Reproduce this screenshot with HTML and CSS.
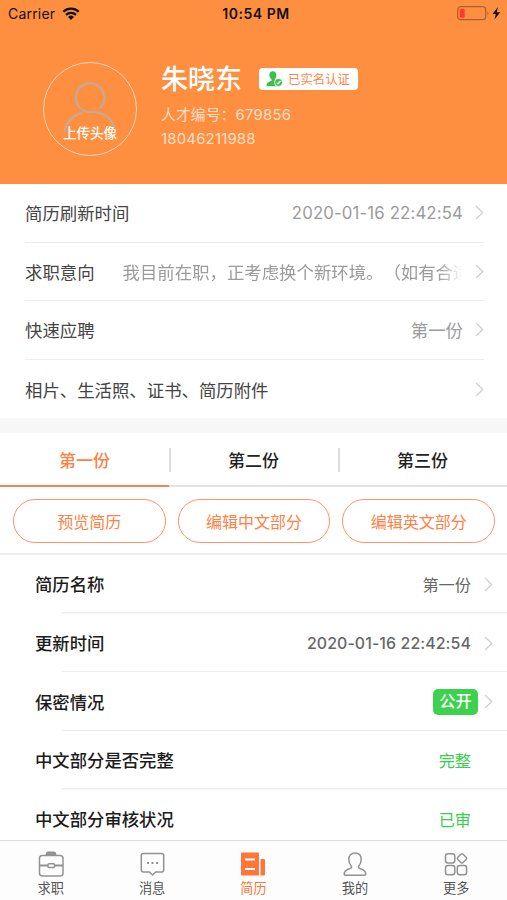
FILE: index.html
```html
<!DOCTYPE html>
<html lang="zh-CN">
<head>
<meta charset="utf-8">
<title>简历</title>
<link rel="stylesheet" href="styles.css">
</head>
<body>
<svg width="0" height="0" class="defs"><symbol id="chev" viewBox="0 0 9 15"><path d="M1 1l6.800 6.500L1 14" fill="none" stroke="#cfcfd1" stroke-width="1.200"/></symbol></svg>
<div class="app">
  <header class="hero">
    <div class="status">
      <div class="carrier"><span>Carrier</span>
        <svg width="18" height="13" viewBox="0 0 18 13"><g fill="none" stroke="#111" stroke-width="2.300"><path d="M1.300 4.800a11 11 0 0 1 15.400 0"/><path d="M4 7.900a7.200 7.200 0 0 1 10 0"/></g><path d="M6 10a4.300 4.300 0 0 1 6 0l-3 3z" fill="#111"/></svg>
      </div>
      <div class="clock">10:54 PM</div>
      <div class="power">
        <svg width="45" height="15" viewBox="0 0 45 15"><rect x=".7" y=".7" width="28" height="13" rx="3" fill="none" stroke="#a8622e" stroke-width="1.200"/><rect x="2.700" y="2.700" width="5" height="9" rx="1" fill="#fb3b30"/><path d="M30.500 5q2 2.200 0 4.400z" fill="#a8622e"/><path d="M41 1l-5.500 7h3.300l-1.300 5.500L43.200 6.300h-3.500z" fill="#111"/></svg>
      </div>
    </div>
    <div class="profile">
      <div class="avatar">
        <svg width="54" height="54" viewBox="0 0 54 54" fill="none" stroke="#bbada2" stroke-width="2"><path d="M36.500 27.500A14.300 14.300 0 1 0 28 31"/><path d="M18.500 32Q3 37 1.500 52M28 31Q47 31 51.500 47"/></svg>
        <span>上传头像</span>
      </div>
      <div class="person">
        <div class="name-line"><h1>朱晓东</h1>
          <div class="verified"><svg width="17" height="16" viewBox="0 0 17 16"><path d="M6.800.3c2.300 0 3.800 1.700 3.600 4.200-.1 1.700-.8 2.800-1.500 3.600v1.200l2 1.200 1 4.800H.5c0-3 .8-4 5-5.600V8.300C4 7 3.200 5.500 3.300 4 3.500 1.700 4.700.3 6.800.3z" fill="#3cc04b"/><circle cx="12.500" cy="11.500" r="4" fill="#3cc04b" stroke="#fff" stroke-width=".8"/><path d="M10.700 11.800l1.300 1.200 2.500-3" fill="none" stroke="#fff" stroke-width="1.200"/></svg><span>已实名认证</span></div>
        </div>
        <p>人才编号：<i>679856</i></p>
        <p>18046211988</p>
      </div>
    </div>
  </header>
  <section class="summary">
    <div class="row"><b>简历刷新时间</b><span class="num">2020-01-16 22:42:54</span><svg class="chev"><use href="#chev"/></svg></div>
    <div class="row"><b>求职意向</b><span class="fade">我目前在职，正考虑换个新环境。（如有合适</span><svg class="chev"><use href="#chev"/></svg></div>
    <div class="row"><b>快速应聘</b><span>第一份</span><svg class="chev"><use href="#chev"/></svg></div>
    <div class="row"><b>相片、生活照、证书、简历附件</b><span></span><svg class="chev"><use href="#chev"/></svg></div>
  </section>
  <nav class="tabs"><div class="on">第一份</div><div>第二份</div><div>第三份</div></nav>
  <div class="actions"><button>预览简历</button><button>编辑中文部分</button><button>编辑英文部分</button></div>
  <section class="details">
    <div class="item"><b>简历名称</b><span>第一份</span><svg class="chev"><use href="#chev"/></svg></div>
    <div class="item"><b>更新时间</b><span class="num">2020-01-16 22:42:54</span><svg class="chev"><use href="#chev"/></svg></div>
    <div class="item"><b>保密情况</b><span class="pill">公开</span><svg class="chev"><use href="#chev"/></svg></div>
    <div class="item"><b>中文部分是否完整</b><span class="ok">完整</span></div>
    <div class="item"><b>中文部分审核状况</b><span class="ok">已审</span></div>
  </section>
  <footer class="bar">
    <div><svg viewBox="0 0 28 28"><path d="M9.500 4.200q0-2 2-2h5q2 0 2 2z" fill="#929292"/><rect x="2.500" y="5.500" width="23.500" height="20.500" rx="3"/><path d="M2.500 15.500h8.500M17.500 15.500H26" stroke-width="2"/><rect x="11" y="13.700" width="6.500" height="3.800" rx="1"/></svg><span>求职</span></div>
    <div><svg viewBox="0 0 28 28"><path d="M5.300 3.500h18.400q2 0 2 2V20q0 2-2 2h-6l-3.200 3-3.200-3h-6q-2 0-2-2V5.500q0-2 2-2z"/><path d="M9 13h2M13.500 13h2M18 13h2" stroke-width="2"/></svg><span>消息</span></div>
    <div class="on"><svg viewBox="0 0 28 28"><path d="M2 3.500q0-1 1-1h16q1 0 1 1v22H3q-1 0-1-1zM21.500 9H25q1 0 1 1v14.500q0 1-1 1h-3.500z" fill="#ff7638" stroke="none"/><path d="M6 9.500h10M6 19h10" stroke="#fff" stroke-width="2"/></svg><span>简历</span></div>
    <div><svg viewBox="0 0 28 28"><path d="M14 3c4 0 6.200 2.500 6.200 6.500 0 3-1 5-2.400 6.500-.8 1.200-.2 2 1 2.500 4.500 1.200 6 2.500 6 5.500 0 .8-.5 1.300-1.300 1.300h-19c-.8 0-1.300-.5-1.300-1.300 0-3 1.500-4.300 6-5.500 1.200-.5 1.800-1.300 1-2.500-1.400-1.500-2.400-3.500-2.400-6.500C7.800 5.500 10 3 14 3z"/></svg><span>我的</span></div>
    <div><svg viewBox="0 0 28 28"><rect x="3.500" y="3.700" width="9.300" height="9.300" rx="2.500"/><rect x="3.500" y="15.500" width="9.300" height="9.300" rx="2.500"/><rect x="15.300" y="15.500" width="9.300" height="9.300" rx="2.500"/><rect x="16.300" y="4.700" width="7.400" height="7.400" rx="1.500" transform="rotate(45 20 8.400)"/></svg><span>更多</span></div>
  </footer>
</div>
</body>
</html>
```
FILE: styles.css
```css
* { box-sizing: border-box; }
body { margin: 0; font-family: Inter, "Noto Sans CJK SC", sans-serif; color: #444; background: #fff; text-spacing-trim: space-all; }
.defs { position: absolute; }
.app { width: 507px; height: 900px; overflow: hidden; display: flex; flex-direction: column; }
.hero { height: 184px; flex: none; background: #ff8f40; color: #fff; }
.status { height: 27px; display: grid; grid-template-columns: 1fr auto 1fr; align-items: center; padding: 0 5px 0 8px; color: #111; font-size: 14px; }
.carrier { display: flex; align-items: center; gap: 7px; letter-spacing: .2px; }
.clock { font-weight: 600; letter-spacing: .55px; padding-left: 2px; }
.power { display: flex; justify-content: flex-end; }
.profile { display: flex; padding: 35px 0 0 43px; }
.avatar { width: 94px; height: 94px; border: 1.500px solid #ffd5b8; border-radius: 50%; position: relative; display: flex; justify-content: center; padding-top: 18px; }
.avatar span { position: absolute; left: 0; right: 0; top: 61px; text-align: center; font-size: 13.500px; line-height: 18px; font-weight: 500; }
.person { padding-left: 24px; }
.name-line { display: flex; align-items: center; height: 34px; gap: 17px; }
h1 { margin: 0; font-size: 27px; line-height: 34px; font-weight: 500; position: relative; top: 1px; }
.verified { width: 99px; height: 22px; border-radius: 4px; background: #fff; color: #ff8547; display: flex; align-items: center; gap: 5px; padding-left: 7px; font-size: 12.400px; white-space: nowrap; }
.person p { margin: 0; font-size: 14.800px; line-height: 23px; color: #ffdfc9; letter-spacing: .1px; }
.person p:last-child { font-size: 15px; letter-spacing: .15px; }
.person i { font-style: normal; letter-spacing: .3px; }
.person p:first-of-type { margin-top: 8px; }
.summary { height: 249px; flex: none; padding: 0 23px 0 25px; border-bottom: 15px solid #f7f7f7; }
.row { height: 58.600px; display: flex; align-items: center; border-bottom: 1px solid #eee; font-size: 17.400px; white-space: nowrap; }
.row:last-child { border: 0; }
.row b, .item b { font-weight: 400; flex: none; }
.row span { flex: 1; text-align: right; color: #9b9b9b; overflow: hidden; }
.row span.fade { margin-left: 28px; text-align: left; -webkit-mask-image: linear-gradient(90deg, #000 93%, transparent); mask-image: linear-gradient(90deg, #000 93%, transparent); }
.row .num { font-size: 16.800px; letter-spacing: .13px; }
.chev { width: 9px; height: 15px; flex: none; margin-left: 12px; }
.tabs { height: 54px; flex: none; display: grid; grid-template-columns: repeat(3, 1fr); font-size: 17px; font-weight: 500; color: #222; }
.tabs div { display: flex; align-items: center; justify-content: center; border-bottom: 2px solid #e2e2e2; position: relative; }
.tabs div + div::before { content: ""; position: absolute; left: 0; top: 15px; width: 1.500px; height: 24px; background: #ddd; }
.tabs .on { color: #ff7f45; border-color: #f58450; }
.actions { height: 68px; flex: none; border-bottom: 2px solid #eee; display: grid; grid-template-columns: repeat(3, 1fr); gap: 12px; padding: 12px 12px 10px 13px; }
.actions button { border: 1.500px solid #ff9468; border-radius: 22px; background: #fff; color: #ff8145; font: 16px Inter, "Noto Sans CJK SC", sans-serif; padding: 0; }
.details { flex: 1; min-height: 0; overflow: hidden; }
.item { height: 58.700px; display: flex; align-items: center; padding: 0 14px 0 35px; font-size: 17.350px; background: linear-gradient(#eee, #eee) 62px 100% / 100% 1.500px no-repeat; }
.item b { font-weight: 500; color: #1c1c1c; margin-top: -1px; }
.item span { margin-left: auto; font-size: 16.200px; color: #666; }
.item .num { letter-spacing: .1px; font-weight: 500; font-size: 15.900px; }
.item .chev { margin-left: 13px; }
.item .ok { color: #36cf4a; padding-right: 22px; }
.item .pill { background: #3cd24d; color: #fff; border-radius: 5px; width: 45px; height: 26px; line-height: 25px; text-align: center; font-weight: 500; }
.item .pill + .chev { margin-left: 6px; }
.bar { height: 60px; flex: none; border-top: 1.500px solid #ddd; background: #fdfdfd; display: grid; grid-template-columns: repeat(5, 1fr); font-size: 13.200px; color: #555; }
.bar div { display: flex; flex-direction: column; align-items: center; padding-top: 9px; }
.bar svg { width: 28px; height: 28px; fill: none; stroke: #929292; stroke-width: 1.500; }
.bar span { line-height: 20px; }
.bar .on { color: #ff7638; }
```
